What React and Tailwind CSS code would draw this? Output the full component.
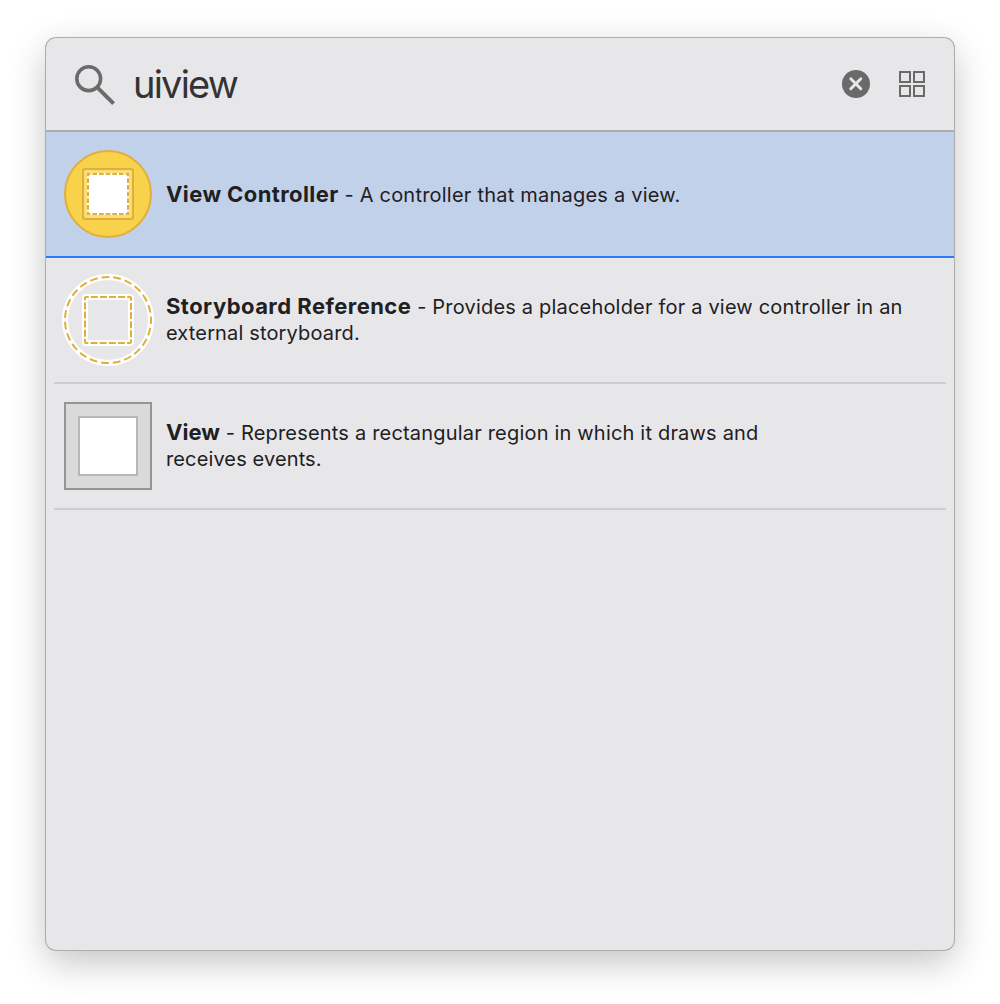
function SearchIcon() {
  return (
    <svg width="44" height="44" viewBox="0 0 44 44" fill="none" stroke="#6b6b6c" className="shrink-0">
      <circle cx="16.7" cy="16.7" r="11.9" strokeWidth="3.6" />
      <path d="M25 25.2 L41.6 41.6" strokeWidth="4" />
    </svg>
  );
}

function ClearIcon() {
  return (
    <svg width="28" height="28" viewBox="0 0 28 28" className="shrink-0">
      <circle cx="14" cy="14" r="14" fill="#6a6a6b" />
      <path d="M8.8 8.8 L18.8 18.8 M18.8 8.8 L8.8 18.8" stroke="#e7e7e9" strokeWidth="3" strokeLinecap="round" />
    </svg>
  );
}

function GridIcon() {
  return (
    <div className="grid h-[26px] w-[26px] shrink-0 grid-cols-2 gap-[2px]">
      {[0, 1, 2, 3].map((i) => (
        <div key={i} className="border-2 border-[#6a6a6b]" />
      ))}
    </div>
  );
}

function ControllerIcon() {
  return (
    <svg width="92" height="92" viewBox="0 0 92 92" fill="none" className="shrink-0">
      <circle cx="46" cy="46" r="43" fill="#f8d24b" stroke="#e0ae3a" strokeWidth="2" />
      <rect x="21" y="21" width="50" height="50" rx="2" fill="#f9dd75" stroke="#e0ae3a" strokeWidth="2" />
      <rect x="25" y="25" width="42" height="42" fill="#fff" />
      <path
        d="M26 26H66M66 26V66M26 66H66M26 26V66"
        stroke="#e0ae3a"
        strokeWidth="2"
        strokeDasharray="4.6667 2"
        strokeDashoffset="2.3333"
      />
      <path d="M25 26h1M66 26h1M25 66h1M66 66h1" stroke="#e0ae3a" strokeWidth="2" />
    </svg>
  );
}

function StoryboardIcon() {
  return (
    <svg width="92" height="92" viewBox="0 0 92 92" fill="none" className="shrink-0">
      <circle cx="46" cy="46" r="43" stroke="#fff" strokeWidth="6" />
      <circle cx="46" cy="46" r="43" stroke="#e0ae3a" strokeWidth="2" strokeDasharray="7.8 3.947" strokeDashoffset="3.9" />
      <rect x="23" y="23" width="46" height="46" rx="1" stroke="#fff" strokeWidth="6" />
      <rect x="23" y="23" width="46" height="46" rx="1" stroke="#e0ae3a" strokeWidth="2" strokeDasharray="7 2.114" strokeDashoffset="4.3" />
    </svg>
  );
}

function ViewIcon() {
  return (
    <div className="mx-[2px] flex h-[88px] w-[88px] shrink-0 items-center justify-center border-2 border-[#949494] bg-[#dadada]">
      <div className="h-[60px] w-[60px] border-2 border-[#b7b7b7] bg-white" />
    </div>
  );
}

function Row({ icon, title, titleClass, lines, selected }) {
  return (
    <li className={selected ? "h-[126px] border-b-2 border-[#2b7cf6] bg-[#c2d1ea] px-2" : "h-[126px] px-2"}>
      <div
        className={
          selected
            ? "flex h-[124px] items-center pl-2"
            : "flex h-[126px] items-center border-b-2 border-[#cececf] pl-2"
        }
      >
        {icon}
        <p
          className={
            selected
              ? "ml-3 whitespace-nowrap text-[20px] leading-[26px] text-[#1f2022]"
              : "mb-[2px] ml-3 whitespace-nowrap text-[20px] leading-[26px] text-[#1f2022]"
          }
        >
          <span className={titleClass}>{title}</span>
          {lines.map((line) => (
            <span key={line.text} className={line.className}>
              {line.text}
            </span>
          ))}
        </p>
      </div>
    </li>
  );
}

export default function App() {
  return (
    <main className="h-[1004px] w-[1000px] overflow-hidden bg-white pl-[46px] pt-[38px] font-['Inter',sans-serif]">
      <section className="h-[912px] w-[908px] overflow-hidden rounded-[10px] bg-[#e7e7e9] shadow-[0_0_0_1px_#adadae,0_12px_36px_rgba(0,0,0,0.24)]">
        <header className="flex h-[94px] items-center border-b-2 border-[#adadaf] pl-[26px] pr-[29px]">
          <SearchIcon />
          <span className="ml-[17px] text-[38px] font-normal leading-none tracking-[-1.8px] text-[#333335]">uiview</span>
          <div className="ml-auto flex items-center gap-[29px]">
            <ClearIcon />
            <GridIcon />
          </div>
        </header>
        <ul>
          <Row
            selected
            icon={<ControllerIcon />}
            title="View Controller"
            titleClass="text-[22px] font-bold tracking-[0.4px]"
            lines={[{ text: " - A controller that manages a view.", className: "tracking-[0.22px]" }]}
          />
          <Row
            icon={<StoryboardIcon />}
            title="Storyboard Reference"
            titleClass="text-[22px] font-bold tracking-[0.46px]"
            lines={[
              { text: " - Provides a placeholder for a view controller in an", className: "tracking-[0.19px]" },
              { text: "external storyboard.", className: "block tracking-[0.15px]" },
            ]}
          />
          <Row
            icon={<ViewIcon />}
            title="View"
            titleClass="text-[22px] font-bold"
            lines={[
              { text: " - Represents a rectangular region in which it draws and", className: "tracking-[0.19px]" },
              { text: "receives events.", className: "block tracking-[0.12px]" },
            ]}
          />
        </ul>
      </section>
    </main>
  );
}
